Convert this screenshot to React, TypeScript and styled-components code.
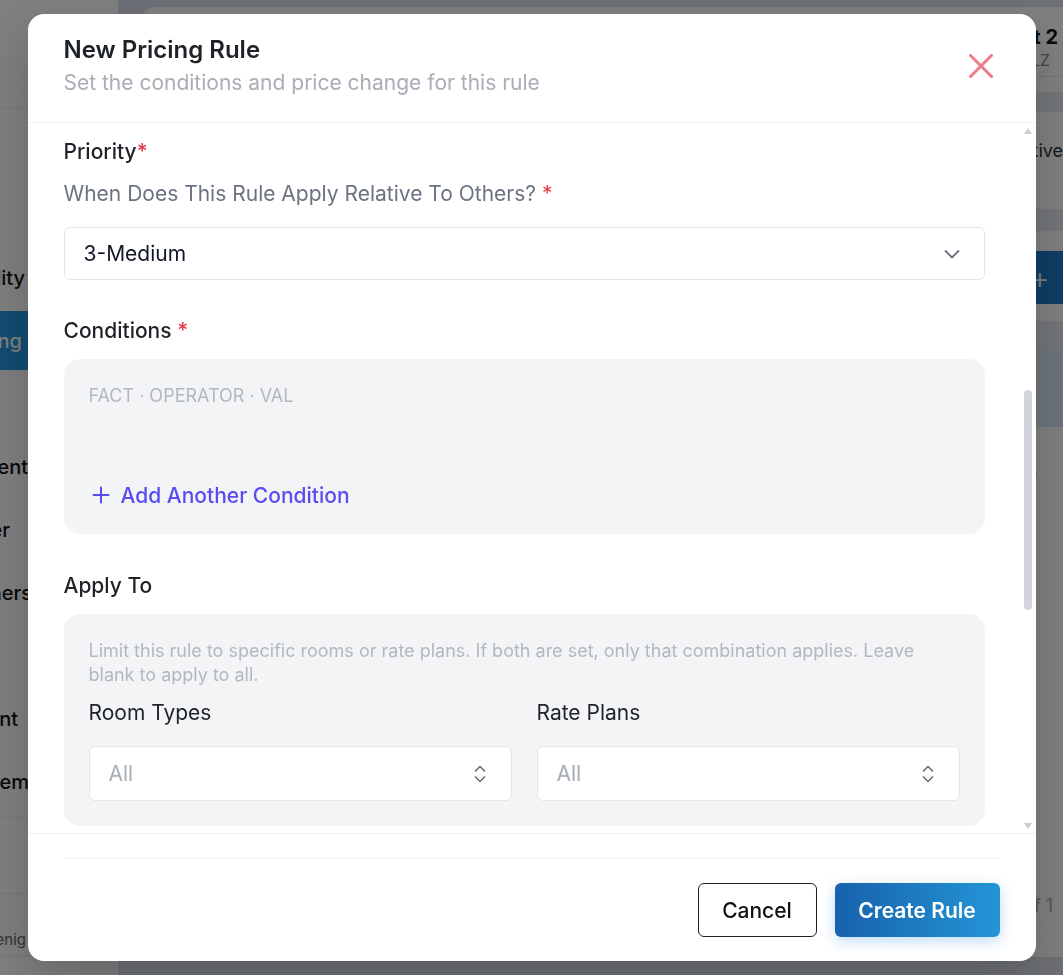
import React from "react";
import styled, { createGlobalStyle } from "styled-components";

const GlobalStyle = createGlobalStyle`
  * { box-sizing: border-box; }
  html, body { margin: 0; padding: 0; height: 100%; overflow: hidden; }
  body {
    font-family: Inter, "Noto Sans", "Liberation Sans", sans-serif;
    color: #1f2937;
    -webkit-font-smoothing: antialiased;
  }
`;

/* ---------- page behind the dialog ---------- */

const navItems = [
  { label: "Availability", inset: 93 },
  { label: "Pricing", inset: 96, active: true },
  { label: "Rates", inset: 140 },
  { label: "Payment", inset: 90 },
  { label: "Planner", inset: 108 },
  { label: "Vouchers", inset: 86 },
  { label: "Tax", inset: 140 },
  { label: "Account", inset: 100 },
  { label: "System", inset: 89 },
];

const AppShell = styled.div`
  display: flex;
  height: 100vh;
  background: #dbe0ec;
  overflow: hidden;
`;

const Sidebar = styled.aside`
  width: 118px;
  flex: none;
  background: #fff;
  display: flex;
  flex-direction: column;
  overflow: hidden;
`;

const SidebarHeader = styled.div`
  height: 109px;
  flex: none;
  border-bottom: 1px solid #ececec;
`;

const NavList = styled.ul`
  list-style: none;
  margin: 0;
  padding: 139px 0 0;
  flex: 1;
  display: flex;
  flex-direction: column;
  gap: 4px;
`;

const NavItem = styled.li<{ $inset: number; $active?: boolean }>`
  height: 59px;
  flex: none;
  display: flex;
  align-items: center;
  justify-content: flex-end;
  padding-right: ${({ $inset }) => $inset}px;
  white-space: nowrap;
  font-size: 20px;
  font-weight: 500;
  color: ${({ $active }) => ($active ? "#fff" : "#111")};
  background: ${({ $active }) => ($active ? "#2697e4" : "transparent")};
`;

const SidebarBlock = styled.div<{ $height: number }>`
  height: ${({ $height }) => $height}px;
  flex: none;
  border-top: 1px solid #ececec;
  display: flex;
  align-items: flex-end;
  justify-content: flex-end;
  padding: 0 92px 5px 0;
  font-size: 15px;
  line-height: 21px;
  color: #666;
  white-space: nowrap;
`;

const Main = styled.main`
  flex: 1;
  min-width: 0;
  padding: 7px 0 18px 22px;
  display: flex;
`;

const Card = styled.section`
  flex: 1;
  background: #fff;
  border-radius: 16px 0 0 16px;
  display: flex;
  flex-direction: column;
  overflow: hidden;
`;

const CardHeader = styled.div`
  height: 70px;
  flex: none;
  border-bottom: 1px solid #e8e8e8;
  display: flex;
  flex-direction: column;
  align-items: flex-end;
  justify-content: center;
  padding: 10px 5px 0 0;
`;

const HotelName = styled.div`
  font-size: 20px;
  font-weight: 700;
  color: #111;
  line-height: 26px;
`;

const HotelCode = styled.div`
  font-size: 16px;
  color: #888;
  line-height: 20px;
  padding-right: 8px;
`;

const Band = styled.div<{ $height: number; $tone?: string; $top?: number }>`
  height: ${({ $height }) => $height}px;
  margin-top: ${({ $top = 0 }) => $top}px;
  flex: none;
  background: ${({ $tone = "#e6ebf3" }) => $tone};
`;

const CardRow = styled.div<{ $height: number; $end?: number }>`
  height: ${({ $height }) => $height}px;
  flex: none;
  display: flex;
  align-items: center;
  justify-content: flex-end;
  padding-right: ${({ $end = 0 }) => $end}px;
  font-size: 18px;
  color: #333;
  white-space: nowrap;
`;

const AddRoomButton = styled.div`
  height: 53px;
  margin-top: 20px;
  align-self: flex-end;
  width: 48px;
  flex: none;
  background: #1e7aca;
  border-radius: 6px 0 0 6px;
  color: #fff;
  font-size: 30px;
  font-weight: 300;
  display: flex;
  align-items: center;
  padding-left: 15px;
`;

const CardSpacer = styled.div`
  flex: 1;
`;

const Pager = styled.div`
  height: 56px;
  margin-bottom: 24px;
  flex: none;
  display: flex;
  align-items: center;
  justify-content: flex-end;
  padding-right: 10px;
  font-size: 18px;
  color: #aaa;
`;

/* ---------- dialog ---------- */

const Overlay = styled.div`
  position: fixed;
  inset: 0;
  background: rgba(0, 0, 0, 0.5);
  display: flex;
  align-items: center;
  justify-content: center;
`;

const Dialog = styled.div`
  width: 1008px;
  height: 947px;
  background: #fff;
  border-radius: 16px;
  display: flex;
  flex-direction: column;
  overflow: hidden;
  box-shadow: 0 20px 50px rgba(0, 0, 0, 0.2);
`;

const Header = styled.header`
  display: flex;
  align-items: center;
  justify-content: space-between;
  padding: 22px 43px 26px 36px;
  border-bottom: 1px solid #eef0f3;
`;

const Title = styled.h2`
  margin: 0;
  font-size: 24px;
  font-weight: 600;
  line-height: 28px;
  color: #1f2328;
`;

const Subtitle = styled.p`
  margin: 6px 0 0;
  font-size: 21px;
  line-height: 26px;
  color: #a8adb6;
`;

const CloseButton = styled.button`
  border: none;
  background: transparent;
  padding: 0;
  width: 24px;
  height: 24px;
  display: flex;
  color: #ee7b86;
  cursor: pointer;
`;

const Body = styled.div`
  flex: 1;
  min-height: 0;
  display: flex;
  border-bottom: 1px solid #eef0f3;
`;

const Content = styled.div`
  flex: 1;
  overflow: hidden;
  padding: 16px 36px 8px;
`;

const ScrollRail = styled.div`
  width: 15px;
  flex: none;
  display: flex;
  flex-direction: column;
  align-items: center;
  padding: 5px 0 4px;
`;

const RailArrow = styled.div<{ $down?: boolean }>`
  width: 0;
  height: 0;
  border-left: 4.5px solid transparent;
  border-right: 4.5px solid transparent;
  ${({ $down }) =>
    $down ? "border-top: 6px solid #c9cdd4;" : "border-bottom: 6px solid #c9cdd4;"}
`;

const RailTrack = styled.div`
  flex: 1;
  display: flex;
  flex-direction: column;
`;

const RailThumb = styled.div`
  width: 8px;
  height: 220px;
  margin-top: 256px;
  border-radius: 4px;
  background: #d1d5db;
`;

const Section = styled.div<{ $top?: number }>`
  margin-top: ${({ $top = 0 }) => $top}px;
`;

const Label = styled.div<{ $weight?: number }>`
  font-size: 21px;
  line-height: 26px;
  font-weight: ${({ $weight = 500 }) => $weight};
  color: #1f2328;
`;

const Required = styled.span`
  color: #e23b4e;
`;

const Question = styled.div`
  margin-top: 16px;
  font-size: 21px;
  line-height: 26px;
  color: #6b7280;
`;

const SelectBox = styled.div<{ $height: number; $placeholder?: boolean }>`
  height: ${({ $height }) => $height}px;
  border: 1px solid #e3e5e9;
  border-radius: 6px;
  background: #fff;
  display: flex;
  align-items: center;
  justify-content: space-between;
  padding: 0 24px 0 19px;
  font-size: 21px;
  color: ${({ $placeholder }) => ($placeholder ? "#a9aeb6" : "#111827")};
  svg { color: #6b7280; flex: none; }
`;

const Panel = styled.div<{ $padding: string }>`
  margin-top: 15px;
  background: #f3f4f6;
  border-radius: 16px;
  padding: ${({ $padding }) => $padding};
`;

const Hint = styled.div<{ $lh: number }>`
  font-size: 18px;
  line-height: ${({ $lh }) => $lh}px;
  color: #b3b8c0;
`;

const AddConditionButton = styled.button`
  margin-top: 76px;
  border: none;
  background: transparent;
  padding: 0 0 0 3px;
  display: flex;
  align-items: center;
  gap: 11px;
  height: 26px;
  font-family: inherit;
  font-size: 21px;
  font-weight: 500;
  color: #584cf0;
  cursor: pointer;
`;

const FieldGrid = styled.div`
  margin-top: 13px;
  display: grid;
  grid-template-columns: 1fr 1fr;
  column-gap: 25px;
  row-gap: 20px;
`;

const Footer = styled.footer`
  padding: 24px 36px;
`;

const FooterInner = styled.div`
  border-top: 1px solid #f3f4f6;
  padding-top: 24px;
  display: flex;
  justify-content: flex-end;
  gap: 18px;
`;

const Button = styled.button<{ $primary?: boolean }>`
  height: 54px;
  border-radius: 6px;
  font-family: inherit;
  font-size: 21px;
  cursor: pointer;
  ${({ $primary }) =>
    $primary
      ? `
    width: 165px;
    border: none;
    font-weight: 600;
    color: #fff;
    background: linear-gradient(90deg, #1762ad 0%, #2395d6 100%);
    box-shadow: 0 4px 14px rgba(35, 140, 213, 0.3);
  `
      : `
    width: 119px;
    border: 1px solid #1f1f1f;
    font-weight: 500;
    color: #111;
    background: #fff;
  `}
`;

const CloseIcon = () => (
  <svg width="24" height="24" viewBox="0 0 24 24" fill="none">
    <path d="M1.5 1.5L22.5 22.5M22.5 1.5L1.5 22.5" stroke="currentColor" strokeWidth="3" strokeLinecap="round" />
  </svg>
);

const ChevronDown = () => (
  <svg width="16" height="10" viewBox="0 0 16 10" fill="none">
    <path d="M1.5 2L8 8.5L14.5 2" stroke="currentColor" strokeWidth="1.8" strokeLinecap="round" strokeLinejoin="round" />
  </svg>
);

const ChevronUpDown = () => (
  <svg width="14" height="20" viewBox="0 0 14 20" fill="none">
    <path d="M2.5 7L7 2.5L11.5 7M2.5 13L7 17.5L11.5 13" stroke="currentColor" strokeWidth="1.7" strokeLinecap="round" strokeLinejoin="round" />
  </svg>
);

const PlusIcon = () => (
  <svg width="18" height="18" viewBox="0 0 18 18" fill="none">
    <path d="M9 1.5V16.5M1.5 9H16.5" stroke="currentColor" strokeWidth="2" strokeLinecap="round" />
  </svg>
);

function BackgroundPage() {
  return (
    <AppShell>
      <Sidebar>
        <SidebarHeader />
        <NavList>
          {navItems.map((item) => (
            <NavItem key={item.label} $inset={item.inset} $active={item.active}>
              {item.label}
            </NavItem>
          ))}
        </NavList>
        <SidebarBlock $height={76} />
        <SidebarBlock $height={62}>Eigenig</SidebarBlock>
        <SidebarBlock $height={20} />
      </Sidebar>
      <Main>
        <Card>
          <CardHeader>
            <HotelName>Hotel Test 2</HotelName>
            <HotelCode>ID 8F3LZ</HotelCode>
          </CardHeader>
          <Band $height={20} $top={15} />
          <CardRow $height={77}>Status: Active</CardRow>
          <Band $height={22} $top={20} />
          <AddRoomButton>+</AddRoomButton>
          <Band $height={28} $top={17} />
          <Band $height={78} $tone="#dbe9f7" />
          <CardRow $height={84} $end={26}>Rooms</CardRow>
          <CardSpacer />
          <Pager>Page 1 of 1</Pager>
        </Card>
      </Main>
    </AppShell>
  );
}

export default function App() {
  return (
    <>
      <GlobalStyle />
      <BackgroundPage />
      <Overlay>
        <Dialog>
          <Header>
            <div>
              <Title>New Pricing Rule</Title>
              <Subtitle>Set the conditions and price change for this rule</Subtitle>
            </div>
            <CloseButton aria-label="Close">
              <CloseIcon />
            </CloseButton>
          </Header>

          <Body>
            <Content>
              <Section>
                <Label>
                  Priority<Required>*</Required>
                </Label>
                <Question>
                  When Does This Rule Apply Relative To Others? <Required>*</Required>
                </Question>
                <Section $top={20}>
                  <SelectBox $height={53}>
                    3-Medium
                    <ChevronDown />
                  </SelectBox>
                </Section>
              </Section>

              <Section $top={38}>
                <Label>
                  Conditions <Required>*</Required>
                </Label>
                <Panel $padding="27px 25px 26px">
                  <Hint $lh={20}>FACT · OPERATOR · VAL</Hint>
                  <AddConditionButton>
                    <PlusIcon />
                    Add Another Condition
                  </AddConditionButton>
                </Panel>
              </Section>

              <Section $top={39}>
                <Label>Apply To</Label>
                <Panel $padding="25px">
                  <Hint $lh={24}>
                    Limit this rule to specific rooms or rate plans. If both are set, only that combination
                    applies. Leave blank to apply to all.
                  </Hint>
                  <FieldGrid>
                    <Label $weight={400}>Room Types</Label>
                    <Label $weight={400}>Rate Plans</Label>
                    <SelectBox $height={55} $placeholder>
                      All
                      <ChevronUpDown />
                    </SelectBox>
                    <SelectBox $height={55} $placeholder>
                      All
                      <ChevronUpDown />
                    </SelectBox>
                  </FieldGrid>
                </Panel>
              </Section>
            </Content>
            <ScrollRail>
              <RailArrow />
              <RailTrack>
                <RailThumb />
              </RailTrack>
              <RailArrow $down />
            </ScrollRail>
          </Body>

          <Footer>
            <FooterInner>
              <Button>Cancel</Button>
              <Button $primary>Create Rule</Button>
            </FooterInner>
          </Footer>
        </Dialog>
      </Overlay>
    </>
  );
}
